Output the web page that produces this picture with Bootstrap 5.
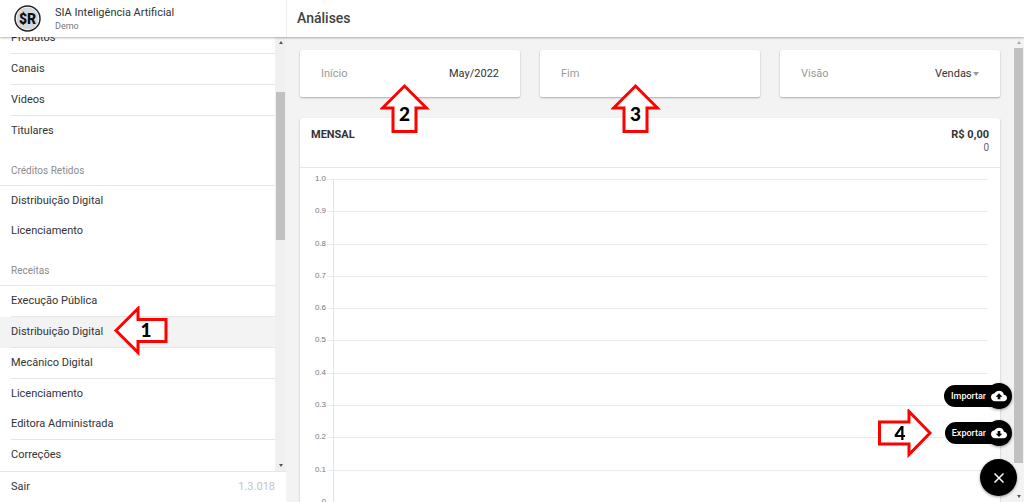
<!DOCTYPE html>
<html lang="pt-BR">
<head>
<meta charset="utf-8">
<meta name="viewport" content="width=device-width, initial-scale=1">
<title>SIA Inteligência Artificial</title>
<link href="https://cdn.jsdelivr.net/npm/bootstrap@5.3.0/dist/css/bootstrap.min.css" rel="stylesheet">
<style>
  body { font: 11px/14px Roboto, "Liberation Sans", sans-serif; color: #333; background: #f3f3f3; }
  .app-bar { height: 37px; box-shadow: 0 1px 2px rgba(0,0,0,.3); z-index: 5; }
  .side-col { width: 286px; }
  .app-bar .side-col { width: 287px; padding-left: 14px; gap: 14px; border-right: 1px solid #eee; }
  .page-title { font-size: 14px; font-weight: 500; padding-left: 10px; color: #424242; }
  .muted { color: #999; }
  .brand-sub { font-size: 9px; line-height: 12px; color: #777; }

  .side-list { margin-top: -14px; }
  .side-list h2 { font-size: 10px; line-height: 14px; font-weight: 400; height: 40px; padding: 18px 11px 0; margin: 0; color: #8c8c8c; border-bottom: 1px solid #e8e8e8; }
  .side-item { display: block; height: 30px; line-height: 30px; padding-left: 11px; color: #333; text-decoration: none; position: relative; }
  .side-item.ruled { height: 31px; }
  .side-item.ruled::after { content: ""; position: absolute; left: 11px; right: 0; bottom: 0; height: 1px; background: #e6e6e6; }
  .side-item.active { background: #f3f3f3; }
  .side-foot { height: 31px; padding: 0 11px; border-top: 1px solid #e6e6e6; }
  .version { color: #c4c4c4; }

  .bar-track { width: 11px; background: #f0f0f0; padding: 4px 1px; }
  .bar-thumb { background: #c1c1c1; }
  .tri { width: 0; height: 0; border: 2px solid transparent; align-self: center; }
  .tri-up { border-bottom: 3px solid #555; border-top: 0; }
  .tri-down { border-top: 3px solid #555; border-bottom: 0; }
  .side-bar .before { flex: 48 0 0; }
  .side-bar .bar-thumb { flex: 148 0 0; }
  .side-bar .after { flex: 223 0 0; }
  .main-bar { background: #f3f3f3; }
  .main-bar .bar-thumb { flex: 415 0 0; margin-top: 4px; }
  .main-bar .after { flex: 32 0 0; }
  .main-bar .tri-up { border-bottom-color: #aaa; }

  .content { padding: 13px 13px 0 14px; gap: 21px; }
  .panel { background: #fff; border-radius: 2px; box-shadow: 0 1px 2px rgba(0,0,0,.3); }
  .filters { gap: 20px; }
  .filter { flex: 1 1 0; height: 47px; padding: 0 21px; position: relative; min-width: 0; }
  .filter input, .filter select { border: 0; padding: 0; background: transparent; color: #333; text-align: right; outline: 0; min-width: 0; width: 90px; }
  .filter select { appearance: none; width: 37px; text-align: left; }
  .caret { border: 3px solid transparent; border-top: 4px solid #999; border-bottom: 0; margin-left: 1px; }
  .report-head { height: 50px; padding: 10px 11px 0; border-bottom: 1px solid #e8e8e8; }
  .report-head h2 { font-size: 11px; line-height: 14px; font-weight: 700; margin: 0; }
  .report-count { font-size: 10px; line-height: 12px; color: #666; }

  .chart { padding: 11px 12px 61px 13px; height: 400px; }
  .tick { flex: 1 1 0; }
  .tick-label { font: 8px/10px "Liberation Sans", sans-serif; color: #777; width: 13px; margin-top: -5px; text-align: right; }
  .tick-dash { width: 6px; border-top: 1px solid #eaeaea; margin-left: 1px; }
  .tick-line { border-top: 1px solid #eaeaea; border-left: 1px solid #e2e2e2; }

  .fabs { position: fixed; right: 7px; bottom: 6px; z-index: 10; gap: 11px; }
  .fab-row { border: 0; padding: 0; background: transparent; color: #fff; margin-right: 5px; position: relative; font-size: 9px; font-weight: 500; }
  .fab-text { background: #000; height: 22px; line-height: 22px; border-radius: 11px 0 0 11px; padding: 0 13px 0 7px; margin-right: -13px; }
  .fab-icon { width: 26px; height: 26px; }
  .fab-icon, .fab-main { background: #000; border-radius: 50%; border: 0; padding: 0; box-shadow: 0 1px 3px rgba(0,0,0,.4); }
  .fab-main { width: 37px; height: 37px; margin-top: 2px; }

  .pointer { position: absolute; z-index: 6; pointer-events: none; }
  .pointer path { fill: #fff; stroke: #f00; stroke-width: 3; }
  .pointer text { font: 900 19px Lato, sans-serif; fill: #000; text-anchor: middle; }
  .pointer-left { left: 113px; top: -11px; }
  .pointer-up { left: 80px; top: 33px; }
  .filter .pointer-up.end-date { left: 71px; }
  .pointer-right { right: 79px; top: -11px; }
</style>
</head>
<body class="vh-100 d-flex flex-column overflow-hidden">

<header class="app-bar d-flex flex-shrink-0 bg-white position-relative">
  <div class="side-col d-flex flex-shrink-0 align-items-center">
    <svg width="27" height="27" viewBox="0 0 27 27" role="img" aria-label="SR">
      <circle cx="13.500" cy="13.500" r="12.500" fill="#fff" stroke="#222" stroke-width="1.500"/>
      <circle cx="13.500" cy="13.500" r="11" fill="#d5d8dc"/>
      <text x="13.500" y="18.500" text-anchor="middle" font-family="Roboto, sans-serif" font-weight="900" font-size="14" fill="#111">$R</text>
    </svg>
    <div>
      <div>SIA Inteligência Artificial</div>
      <div class="brand-sub">Demo</div>
    </div>
  </div>
  <h1 class="page-title mb-0 align-self-center">Análises</h1>
</header>

<div class="d-flex flex-grow-1 overflow-hidden">
  <aside class="side-col d-flex flex-column flex-shrink-0 bg-white">
    <div class="d-flex flex-grow-1 overflow-hidden">
      <nav class="side-list flex-grow-1">
        <a class="side-item ruled" href="#">Produtos</a>
        <a class="side-item ruled" href="#">Canais</a>
        <a class="side-item ruled" href="#">Videos</a>
        <a class="side-item" href="#">Titulares</a>
        <h2>Créditos Retidos</h2>
        <a class="side-item" href="#">Distribuição Digital</a>
        <a class="side-item" href="#">Licenciamento</a>
        <h2>Receitas</h2>
        <a class="side-item ruled" href="#">Execução Pública</a>
        <a class="side-item ruled active" href="#" aria-current="page">Distribuição Digital
          <svg class="pointer pointer-left" width="56" height="50" viewBox="0 0 56 50"><path d="M3 24.500 25 2.500V13.500H53V35.500H25V46.500Z"/><text x="33" y="31">1</text></svg>
        </a>
        <a class="side-item ruled" href="#">Mecânico Digital</a>
        <a class="side-item" href="#">Licenciamento</a>
        <a class="side-item ruled" href="#">Editora Administrada</a>
        <a class="side-item" href="#">Correções</a>
      </nav>
      <div class="bar-track side-bar d-flex flex-column flex-shrink-0" aria-hidden="true">
        <span class="tri tri-up"></span><span class="before"></span><span class="bar-thumb"></span><span class="after"></span><span class="tri tri-down"></span>
      </div>
    </div>
    <div class="side-foot d-flex flex-shrink-0 justify-content-between align-items-center">
      <a class="text-reset text-decoration-none" href="#">Sair</a>
      <span class="version">1.3.018</span>
    </div>
  </aside>

  <main class="content d-flex flex-column flex-grow-1 overflow-hidden">
    <form class="filters d-flex flex-shrink-0">
      <div class="filter panel d-flex align-items-center justify-content-between">
        <label class="muted" for="inicio">Início</label>
        <input id="inicio" type="text" value="May/2022">
        <svg class="pointer pointer-up" width="50" height="52" viewBox="0 0 50 52"><path d="M24.500 3 46.500 25H36V48.500H13V25H2.500Z"/><text x="24.500" y="38">2</text></svg>
      </div>
      <div class="filter panel d-flex align-items-center justify-content-between">
        <label class="muted" for="fim">Fim</label>
        <input id="fim" type="text">
        <svg class="pointer pointer-up end-date" width="50" height="52" viewBox="0 0 50 52"><path d="M24.500 3 46.500 25H36V48.500H13V25H2.500Z"/><text x="24.500" y="38">3</text></svg>
      </div>
      <div class="filter panel d-flex align-items-center">
        <label class="muted me-auto" for="visao">Visão</label>
        <select id="visao"><option>Vendas</option></select>
        <span class="caret"></span>
      </div>
    </form>

    <section class="panel flex-shrink-0">
      <div class="report-head d-flex justify-content-between">
        <h2>MENSAL</h2>
        <div class="text-end"><div class="fw-bold">R$ 0,00</div><div class="report-count">0</div></div>
      </div>
      <div class="chart d-flex flex-column">
        <div class="tick d-flex"><span class="tick-label">1.0</span><span class="tick-dash"></span><span class="tick-line flex-grow-1"></span></div>
        <div class="tick d-flex"><span class="tick-label">0.9</span><span class="tick-dash"></span><span class="tick-line flex-grow-1"></span></div>
        <div class="tick d-flex"><span class="tick-label">0.8</span><span class="tick-dash"></span><span class="tick-line flex-grow-1"></span></div>
        <div class="tick d-flex"><span class="tick-label">0.7</span><span class="tick-dash"></span><span class="tick-line flex-grow-1"></span></div>
        <div class="tick d-flex"><span class="tick-label">0.6</span><span class="tick-dash"></span><span class="tick-line flex-grow-1"></span></div>
        <div class="tick d-flex"><span class="tick-label">0.5</span><span class="tick-dash"></span><span class="tick-line flex-grow-1"></span></div>
        <div class="tick d-flex"><span class="tick-label">0.4</span><span class="tick-dash"></span><span class="tick-line flex-grow-1"></span></div>
        <div class="tick d-flex"><span class="tick-label">0.3</span><span class="tick-dash"></span><span class="tick-line flex-grow-1"></span></div>
        <div class="tick d-flex"><span class="tick-label">0.2</span><span class="tick-dash"></span><span class="tick-line flex-grow-1"></span></div>
        <div class="tick d-flex"><span class="tick-label">0.1</span><span class="tick-dash"></span><span class="tick-line flex-grow-1"></span></div>
        <div class="d-flex"><span class="tick-label">0</span></div>
      </div>
    </section>
  </main>
  <div class="bar-track main-bar d-flex flex-column flex-shrink-0" aria-hidden="true">
    <span class="tri tri-up"></span><span class="bar-thumb"></span><span class="after"></span><span class="tri tri-down"></span>
  </div>
</div>

<div class="fabs d-flex flex-column align-items-end">
  <button type="button" class="fab-row d-flex align-items-center">
    <span class="fab-text">Importar</span>
    <span class="fab-icon d-flex align-items-center justify-content-center">
      <svg class="position-relative" width="16" height="16" viewBox="0 0 24 24" fill="#fff"><path d="M19.350 10.040A7.490 7.490 0 0 0 12 4C9.110 4 6.600 5.640 5.350 8.040A5.994 5.994 0 0 0 0 14c0 3.310 2.690 6 6 6h13c2.760 0 5-2.240 5-5 0-2.640-2.050-4.780-4.650-4.960zM14 13v4h-4v-4H7l5-5 5 5h-3z"/></svg>
    </span>
  </button>
  <button type="button" class="fab-row d-flex align-items-center">
    <svg class="pointer pointer-right" width="56" height="50" viewBox="0 0 56 50"><path d="M53 24 32 2.500V13H2.500V35H32V45.500Z"/><text x="23" y="31">4</text></svg>
    <span class="fab-text">Exportar</span>
    <span class="fab-icon d-flex align-items-center justify-content-center">
      <svg class="position-relative" width="16" height="16" viewBox="0 0 24 24" fill="#fff"><path d="M19.350 10.040A7.490 7.490 0 0 0 12 4C9.110 4 6.600 5.640 5.350 8.040A5.994 5.994 0 0 0 0 14c0 3.310 2.690 6 6 6h13c2.760 0 5-2.240 5-5 0-2.640-2.050-4.780-4.650-4.960zM17 13l-5 5-5-5h3V9h4v4h3z"/></svg>
    </span>
  </button>
  <button type="button" class="fab-main d-flex align-items-center justify-content-center" aria-label="Fechar">
    <svg width="12" height="12" viewBox="0 0 12 12" stroke="#fff" stroke-width="1.500"><path d="M1.500 1.500l9 9M10.500 1.500l-9 9"/></svg>
  </button>
</div>

<script src="https://cdn.jsdelivr.net/npm/bootstrap@5.3.0/dist/js/bootstrap.bundle.min.js"></script>
</body>
</html>
